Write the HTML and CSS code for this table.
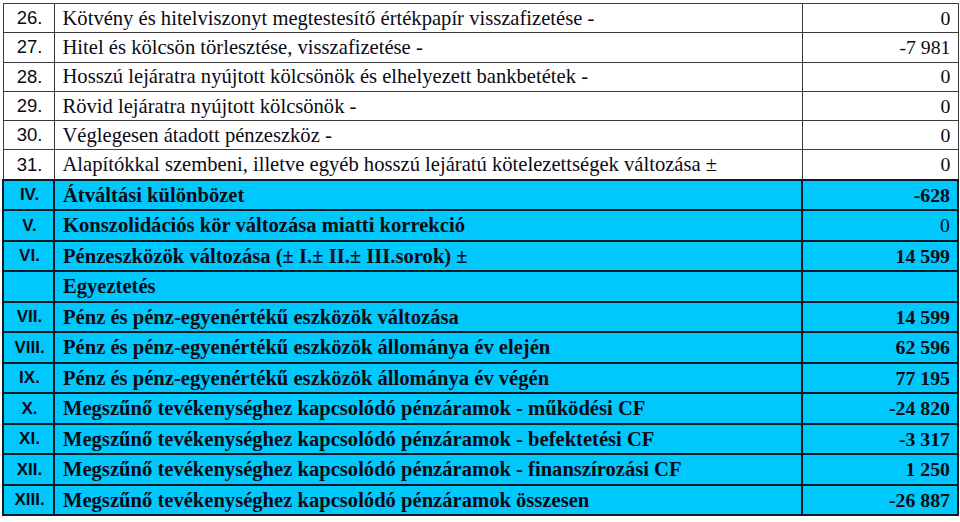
FILE: index.html
```html
<!DOCTYPE html>
<html lang="hu">
<head>
<meta charset="utf-8">
<title>Cash-flow</title>
<link rel="stylesheet" href="styles.css">
</head>
<body>
<table class="cf">
  <colgroup><col class="c-no"><col class="c-name"><col class="c-val"></colgroup>
  <tbody>
    <tr class="w"><td class="no">26.</td><td class="name">Kötvény és hitelviszonyt megtestesítő értékpapír visszafizetése -</td><td class="val">0</td></tr>
    <tr class="w"><td class="no">27.</td><td class="name">Hitel és kölcsön törlesztése, visszafizetése -</td><td class="val">-7 981</td></tr>
    <tr class="w"><td class="no">28.</td><td class="name">Hosszú lejáratra nyújtott kölcsönök és elhelyezett bankbetétek -</td><td class="val">0</td></tr>
    <tr class="w"><td class="no">29.</td><td class="name">Rövid lejáratra nyújtott kölcsönök -</td><td class="val">0</td></tr>
    <tr class="w"><td class="no">30.</td><td class="name">Véglegesen átadott pénzeszköz -</td><td class="val">0</td></tr>
    <tr class="w"><td class="no">31.</td><td class="name">Alapítókkal szembeni, illetve egyéb hosszú lejáratú kötelezettségek változása ±</td><td class="val">0</td></tr>
    <tr class="b"><td class="no">IV.</td><td class="name">Átváltási különbözet</td><td class="val">-628</td></tr>
    <tr class="b"><td class="no">V.</td><td class="name">Konszolidációs kör változása miatti korrekció</td><td class="val thin">0</td></tr>
    <tr class="b"><td class="no">VI.</td><td class="name">Pénzeszközök változása (± I.± II.± III.sorok) ±</td><td class="val">14 599</td></tr>
    <tr class="b"><td class="no"></td><td class="name">Egyeztetés</td><td class="val"></td></tr>
    <tr class="b"><td class="no">VII.</td><td class="name">Pénz és pénz-egyenértékű eszközök változása</td><td class="val">14 599</td></tr>
    <tr class="b"><td class="no">VIII.</td><td class="name">Pénz és pénz-egyenértékű eszközök állománya év elején</td><td class="val">62 596</td></tr>
    <tr class="b"><td class="no">IX.</td><td class="name">Pénz és pénz-egyenértékű eszközök állománya év végén</td><td class="val">77 195</td></tr>
    <tr class="b"><td class="no">X.</td><td class="name">Megszűnő tevékenységhez kapcsolódó pénzáramok - működési CF</td><td class="val">-24 820</td></tr>
    <tr class="b"><td class="no">XI.</td><td class="name">Megszűnő tevékenységhez kapcsolódó pénzáramok - befektetési CF</td><td class="val">-3 317</td></tr>
    <tr class="b"><td class="no">XII.</td><td class="name">Megszűnő tevékenységhez kapcsolódó pénzáramok - finanszírozási CF</td><td class="val">1 250</td></tr>
    <tr class="b"><td class="no">XIII.</td><td class="name">Megszűnő tevékenységhez kapcsolódó pénzáramok összesen</td><td class="val">-26 887</td></tr>
  </tbody>
</table>
</body>
</html>
```
FILE: styles.css
```css
html, body {
  margin: 0;
  padding: 0;
  background: #ffffff;
}

.cf {
  margin: 3px 0 0 2px;
  width: 955px;
  border-collapse: collapse;
  table-layout: fixed;
  color: #0b0b14;
}

.c-no { width: 51px; }
.c-name { width: 748px; }
.c-val { width: 156px; }

.cf td {
  padding: 0;
  vertical-align: middle;
  white-space: nowrap;
}

.no {
  font-family: "Liberation Sans", Arial, sans-serif;
  text-align: center;
  padding-left: 2px !important;
}

.name {
  font-family: "Liberation Serif", "Times New Roman", serif;
  padding-left: 8px !important;
}

.val {
  font-family: "Liberation Serif", "Times New Roman", serif;
  text-align: right;
  padding-right: 7px !important;
}

.w td {
  height: 28.3px;
  border: 1px solid #3a3a3a;
  font-size: 20.6px;
}

.w .no { font-size: 18.5px; }
.w .val { font-size: 19.8px; }

.b td {
  height: 28.5px;
  border: 2px solid #0c1a22;
  background: #00c8fc;
  font-size: 20.6px;
  font-weight: bold;
}

.b .no { font-size: 17px; }
.b .val { font-size: 19.8px; }

.b .val.thin { font-weight: normal; }
```
